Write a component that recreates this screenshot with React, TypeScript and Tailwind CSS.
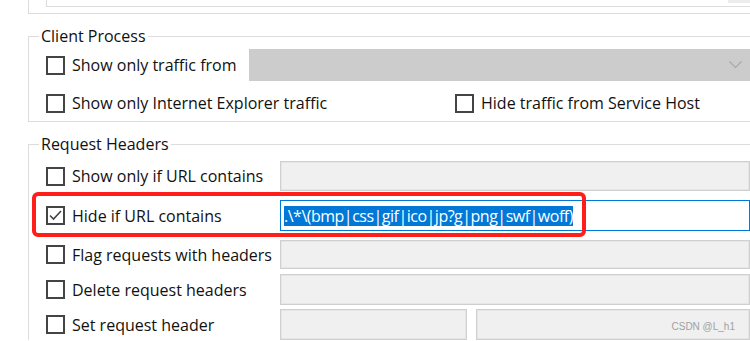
import React from "react";

const font = { fontFamily: '"Open Sans", "Noto Sans", sans-serif' };

function Box({ checked = false }: { checked?: boolean }) {
  return (
    <div className="w-[19px] h-[19px] shrink-0 border-2 border-[#444] bg-white flex items-center justify-center">
      {checked && (
        <svg width="15" height="15" viewBox="0 0 15 15">
          <polyline points="2,7.5 5.5,11 13,3" fill="none" stroke="#444" strokeWidth="1.6" />
        </svg>
      )}
    </div>
  );
}

function Check({ label, checked = false, width }: { label: string; checked?: boolean; width: string }) {
  return (
    <div className={`flex items-center gap-[7px] shrink-0 ${width}`}>
      <Box checked={checked} />
      <span className="whitespace-nowrap">{label}</span>
    </div>
  );
}

function Field({ className = "" }: { className?: string }) {
  return (
    <div
      className={`bg-[#f0f0f0] border border-[#cfcfcf] shadow-[inset_0_0_0_1px_#e6e6e6] ${className}`}
    />
  );
}

export default function App() {
  return (
    <div
      className="relative w-[750px] h-[341px] overflow-hidden bg-white pl-[28px] text-[16px] leading-[20px] text-[#111]"
      style={font}
    >
      {/* fragment of the group box above */}
      <div className="h-[14px] border-l border-b border-[#dcdcdc] flex">
        <div className="ml-[17px] h-[7px] flex-1 border-l border-b border-[#dcdcdc] flex justify-end">
          <div className="w-[22px] h-[3px] bg-[#ececec]" />
        </div>
      </div>

      {/* Client Process */}
      <fieldset className="mt-[12px] border-l border-t border-b border-r-0 border-[#dcdcdc]">
        <legend className="ml-[10px] px-[2px] leading-[20px]">Client Process</legend>
        <div className="pl-[17px] pt-[3px] pb-[8px]">
          <div className="flex items-center h-[32px]">
            <Check label="Show only traffic from" width="w-[203px]" />
            <div className="flex-1 h-[32px] bg-[#cccccc] flex items-center justify-end pr-[8px]">
              <svg width="13" height="8" viewBox="0 0 13 8">
                <polyline points="0.5,0.5 6.5,6.5 12.5,0.5" fill="none" stroke="#a8a8a8" strokeWidth="1.2" />
              </svg>
            </div>
          </div>
          <div className="flex items-center h-[20px] mt-[12px]">
            <Check label="Show only Internet Explorer traffic" width="w-[409px]" />
            <Check label="Hide traffic from Service Host" width="w-auto" />
          </div>
        </div>
      </fieldset>

      {/* Request Headers */}
      <fieldset className="mt-[12px] border-l border-t border-r-0 border-b-0 border-[#dcdcdc]">
        <legend className="ml-[10px] px-[2px] leading-[20px]">Request Headers</legend>
        <div className="pl-[17px] pt-[7px]">
          <div className="flex items-center h-[30px]">
            <Check label="Show only if URL contains" width="w-[234px]" />
            <Field className="flex-1 h-[30px]" />
          </div>
          <div className="flex items-center h-[31px] mt-[9px]">
            <Check label="Hide if URL contains" checked width="w-[234px]" />
            <div className="flex-1 h-[31px] bg-white border border-[#0078d7] flex items-center pl-[3px]">
              <span className="bg-[#0078d7] text-white leading-[20px] tracking-[-0.5px] whitespace-nowrap">
                .\*\(bmp|css|gif|ico|jp?g|png|swf|woff)
              </span>
            </div>
          </div>
          <div className="flex items-center h-[29px] mt-[9px]">
            <Check label="Flag requests with headers" width="w-[234px]" />
            <Field className="flex-1 h-[29px]" />
          </div>
          <div className="flex items-center h-[31px] mt-[5px]">
            <Check label="Delete request headers" width="w-[234px]" />
            <Field className="flex-1 h-[31px]" />
          </div>
          <div className="flex items-center h-[31px] mt-[4px]">
            <Check label="Set request header" width="w-[234px]" />
            <Field className="w-[187px] h-[31px]" />
            <Field className="ml-[9px] flex-1 h-[31px]" />
          </div>
        </div>
      </fieldset>

      {/* red annotation */}
      <div className="absolute left-[32px] top-[192px] w-[554px] h-[45px] border-4 border-[#ff1f1a] rounded-[6px] pointer-events-none" />

      {/* watermark */}
      <div
        className="absolute right-[15px] top-[320px] text-[10px] leading-[14px] text-[#a0a0a0]"
        style={{ fontFamily: '"Liberation Sans", Arial, sans-serif' }}
      >
        CSDN @L_h1
      </div>
    </div>
  );
}
